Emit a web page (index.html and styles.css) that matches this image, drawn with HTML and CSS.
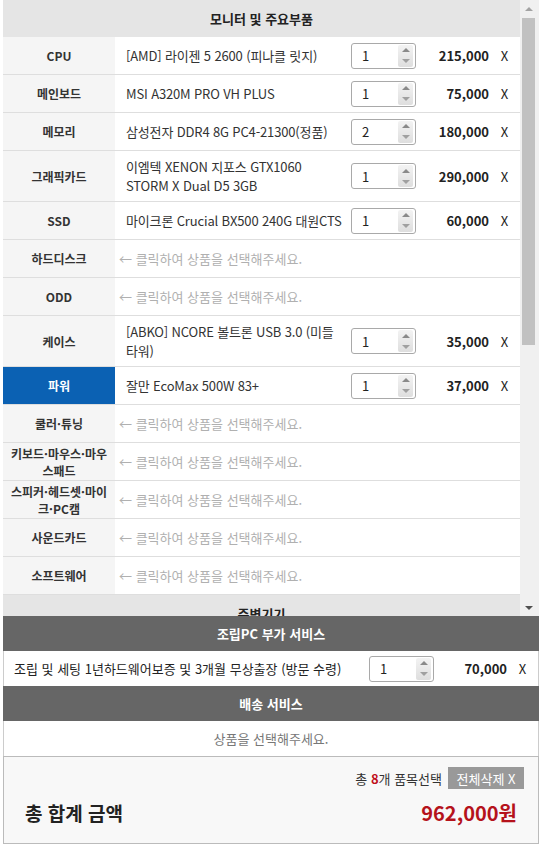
FILE: index.html
```html
<!DOCTYPE html>
<html lang="ko">
<head>
<meta charset="utf-8">
<title>견적</title>
<link rel="stylesheet" href="styles.css">
</head>
<body>
<div class="wrap">
  <div class="scroller">
    <div class="list">
      <div class="cat">모니터 및 주요부품</div>

      <div class="row">
        <div class="lbl">CPU</div>
        <div class="name">[AMD] 라이젠 5 2600 (피나클 릿지)</div>
        <div class="qty"><div class="spin"><span class="num">1</span><span class="btns"><span class="up"></span><span class="dn"></span></span></div></div>
        <div class="price">215,000</div>
        <div class="del">X</div>
      </div>

      <div class="row">
        <div class="lbl">메인보드</div>
        <div class="name">MSI A320M PRO VH PLUS</div>
        <div class="qty"><div class="spin"><span class="num">1</span><span class="btns"><span class="up"></span><span class="dn"></span></span></div></div>
        <div class="price">75,000</div>
        <div class="del">X</div>
      </div>

      <div class="row">
        <div class="lbl">메모리</div>
        <div class="name">삼성전자 DDR4 8G PC4-21300(정품)</div>
        <div class="qty"><div class="spin"><span class="num">2</span><span class="btns"><span class="up"></span><span class="dn"></span></span></div></div>
        <div class="price">180,000</div>
        <div class="del">X</div>
      </div>

      <div class="row">
        <div class="lbl">그래픽카드</div>
        <div class="name">이엠텍 XENON 지포스 GTX1060<br>STORM X Dual D5 3GB</div>
        <div class="qty"><div class="spin"><span class="num">1</span><span class="btns"><span class="up"></span><span class="dn"></span></span></div></div>
        <div class="price">290,000</div>
        <div class="del">X</div>
      </div>

      <div class="row">
        <div class="lbl">SSD</div>
        <div class="name">마이크론 Crucial BX500 240G 대원CTS</div>
        <div class="qty"><div class="spin"><span class="num">1</span><span class="btns"><span class="up"></span><span class="dn"></span></span></div></div>
        <div class="price">60,000</div>
        <div class="del">X</div>
      </div>

      <div class="row">
        <div class="lbl">하드디스크</div>
        <div class="hint">← 클릭하여 상품을 선택해주세요.</div>
      </div>

      <div class="row">
        <div class="lbl">ODD</div>
        <div class="hint">← 클릭하여 상품을 선택해주세요.</div>
      </div>

      <div class="row">
        <div class="lbl">케이스</div>
        <div class="name">[ABKO] NCORE 볼트론 USB 3.0 (미들<br>타워)</div>
        <div class="qty"><div class="spin"><span class="num">1</span><span class="btns"><span class="up"></span><span class="dn"></span></span></div></div>
        <div class="price">35,000</div>
        <div class="del">X</div>
      </div>

      <div class="row">
        <div class="lbl active">파워</div>
        <div class="name">잘만 EcoMax 500W 83+</div>
        <div class="qty"><div class="spin"><span class="num">1</span><span class="btns"><span class="up"></span><span class="dn"></span></span></div></div>
        <div class="price">37,000</div>
        <div class="del">X</div>
      </div>

      <div class="row">
        <div class="lbl">쿨러·튜닝</div>
        <div class="hint">← 클릭하여 상품을 선택해주세요.</div>
      </div>

      <div class="row">
        <div class="lbl">키보드·마우스·마우<br>스패드</div>
        <div class="hint">← 클릭하여 상품을 선택해주세요.</div>
      </div>

      <div class="row">
        <div class="lbl">스피커·헤드셋·마이<br>크·PC캠</div>
        <div class="hint">← 클릭하여 상품을 선택해주세요.</div>
      </div>

      <div class="row">
        <div class="lbl">사운드카드</div>
        <div class="hint">← 클릭하여 상품을 선택해주세요.</div>
      </div>

      <div class="row">
        <div class="lbl">소프트웨어</div>
        <div class="hint">← 클릭하여 상품을 선택해주세요.</div>
      </div>

      <div class="cat">주변기기</div>
    </div>
    <div class="sbar">
      <span class="sb-up"></span>
      <div class="sb-track"><div class="sb-thumb"></div></div>
      <span class="sb-dn"></span>
    </div>
  </div>

  <div class="bar">조립PC 부가 서비스</div>
  <div class="svc">
    <div class="svc-name">조립 및 세팅 1년하드웨어보증 및 3개월 무상출장 (방문 수령)</div>
    <div class="qty"><div class="spin"><span class="num">1</span><span class="btns"><span class="up"></span><span class="dn"></span></span></div></div>
    <div class="price">70,000</div>
    <div class="del">X</div>
  </div>
  <div class="bar">배송 서비스</div>
  <div class="msg">상품을 선택해주세요.</div>

  <div class="total">
    <div class="total-top">
      <span class="count">총 <b>8</b>개 품목선택</span>
      <span class="clear">전체삭제 X</span>
    </div>
    <div class="total-sum">
      <span class="sum-label">총 합계 금액</span>
      <span class="sum-value">962,000원</span>
    </div>
  </div>
</div>
</body>
</html>
```

FILE: styles.css
```css
* { box-sizing: border-box; }
html, body { margin: 0; padding: 0; background: #fff; }
body {
  font-family: "Noto Sans CJK KR", "Noto Sans", sans-serif;
  font-size: 13px;
  color: #333;
}
.wrap {
  width: 536px;
  margin-left: 3px;
}

/* scroll area */
.scroller {
  display: flex;
  height: 616px;
  overflow: hidden;
}
.list {
  width: 517px;
  flex: none;
}
.cat {
  height: 37px;
  background: #e5e5e5;
  display: flex;
  align-items: center;
  justify-content: center;
  font-weight: bold;
  font-size: 13px;
  color: #222;
  border-bottom: 1px solid #e5e5e5;
}
.row {
  display: grid;
  grid-template-columns: 112px 236px 65px 73px 31px;
  min-height: 38px;
  border-bottom: 1px solid #dedede;
  background: #fff;
}
.lbl {
  background: #f5f5f5;
  display: flex;
  align-items: center;
  justify-content: center;
  text-align: center;
  font-weight: bold;
  font-size: 12px;
  line-height: 17px;
  color: #333;
  padding: 0 2px;
}
.lbl.active {
  background: #0b61b3;
  color: #fff;
}
.name {
  display: flex;
  align-items: center;
  padding: 6px 0 6px 11px;
  line-height: 19px;
  color: #333;
  white-space: nowrap;
  letter-spacing: -0.15px;
}
.hint {
  grid-column: 2 / -1;
  display: flex;
  align-items: center;
  padding-left: 4px;
  color: #b0b0b0;
}
.qty {
  display: flex;
  align-items: center;
}
.spin {
  width: 65px;
  height: 26px;
  border: 1px solid #a9a9a9;
  border-radius: 3px;
  background: #fff;
  display: flex;
  align-items: stretch;
  padding: 1px 2px 1px 0;
}
.num {
  flex: 1;
  display: flex;
  align-items: center;
  padding-left: 10px;
  font-size: 13px;
  color: #222;
}
.btns {
  width: 15px;
  display: flex;
  flex-direction: column;
  background: linear-gradient(#f3f3f3, #dedede);
  border-radius: 2px;
}
.btns .up, .btns .dn {
  flex: 1;
  display: flex;
  align-items: center;
  justify-content: center;
}
.btns .up::before {
  content: "";
  border-left: 4px solid transparent;
  border-right: 4px solid transparent;
  border-bottom: 4px solid #8a8a8a;
}
.btns .dn::before {
  content: "";
  border-left: 4px solid transparent;
  border-right: 4px solid transparent;
  border-top: 4px solid #a0a0a0;
}
.price {
  display: flex;
  align-items: center;
  justify-content: flex-end;
  font-weight: bold;
  color: #222;
}
.del {
  display: flex;
  align-items: center;
  justify-content: center;
  color: #222;
}

/* fake scrollbar */
.sbar {
  width: 19px;
  flex: none;
  background: #f0f0f0;
  display: flex;
  flex-direction: column;
  align-items: center;
  padding: 0 2px 0 0;
}
.sb-up, .sb-dn {
  height: 17px;
  width: 100%;
  display: flex;
  align-items: center;
  justify-content: center;
}
.sb-up::before {
  content: "";
  border-left: 4px solid transparent;
  border-right: 4px solid transparent;
  border-bottom: 4px solid #a3a3a3;
}
.sb-dn::before {
  content: "";
  border-left: 4px solid transparent;
  border-right: 4px solid transparent;
  border-top: 4px solid #505050;
}
.sb-track {
  flex: 1;
  width: 100%;
  padding: 1px 2px 0 2px;
}
.sb-thumb {
  height: 327px;
  background: #c1c1c1;
}

/* bottom */
.bar {
  height: 35px;
  background: #666;
  color: #fff;
  font-weight: bold;
  display: flex;
  align-items: center;
  justify-content: center;
}
.svc {
  display: grid;
  grid-template-columns: 1fr 65px 73px 31px;
  height: 35px;
  background: #fff;
  border-left: 1px solid #ccc;
  border-right: 1px solid #ccc;
}
.svc-name {
  display: flex;
  align-items: center;
  padding-left: 10px;
  color: #222;
  white-space: nowrap;
}
.msg {
  height: 35px;
  display: flex;
  align-items: center;
  justify-content: center;
  color: #777;
  border-left: 1px solid #ccc;
  border-right: 1px solid #ccc;
}
.total {
  border: 1px solid #bbb;
  background: #f8f8f8;
  padding: 10px 14px 16px 21px;
}
.total-top {
  display: flex;
  justify-content: flex-end;
  align-items: center;
  height: 22px;
  gap: 6px;
}
.count {
  font-size: 13px;
  color: #333;
}
.count b {
  color: #c0101c;
}
.clear {
  background: #999;
  color: #fff;
  height: 22px;
  width: 76px;
  display: flex;
  align-items: center;
  justify-content: center;
  font-size: 13px;
}
.total-sum {
  display: flex;
  justify-content: space-between;
  align-items: center;
  height: 30px;
  margin-top: 8px;
  padding-right: 7px;
}
.sum-label {
  font-size: 19px;
  font-weight: bold;
  color: #222;
}
.sum-value {
  font-size: 20px;
  font-weight: bold;
  color: #b5121b;
}
```
